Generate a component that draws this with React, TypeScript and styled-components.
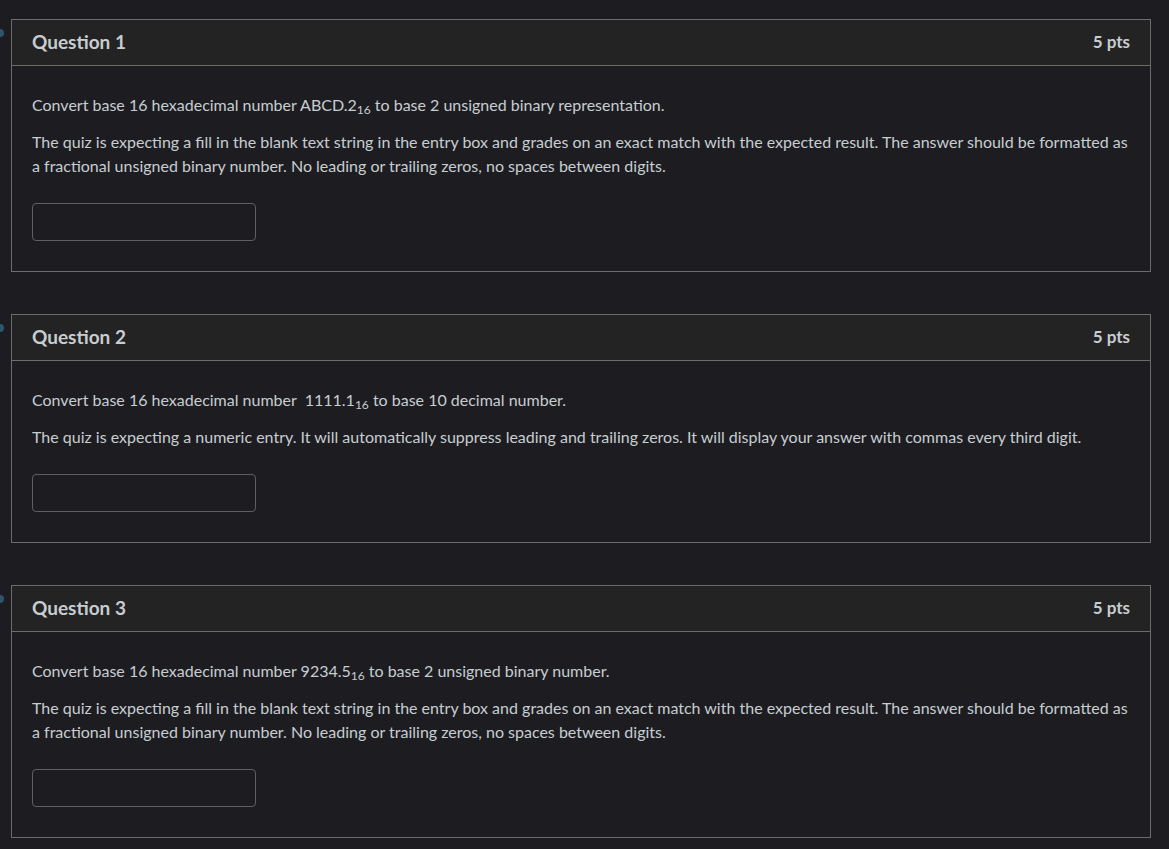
import React from 'react';
import styled, { createGlobalStyle } from 'styled-components';

const GlobalStyle = createGlobalStyle`
  html, body {
    margin: 0;
    padding: 0;
    background: #1d1d21;
  }
  body {
    font-family: Lato, "Noto Sans", sans-serif;
    color: #c7cdd1;
  }
`;

const Page = styled.div`
  padding: 19px 18px 20px 11px;
  display: flex;
  flex-direction: column;
  gap: 42px;
`;

const Card = styled.section`
  position: relative;
  width: 1138px;
  border: 1px solid #6b6b6b;
  background: #1d1d21;
`;

const Marker = styled.span`
  position: absolute;
  left: -16px;
  top: 9px;
  width: 8px;
  height: 8px;
  border-radius: 50%;
  background: #2c5670;
`;

const Header = styled.header`
  height: 46px;
  padding: 0 20px 3px 20px;
  box-sizing: border-box;
  display: flex;
  align-items: center;
  justify-content: space-between;
  background: #232323;
  border-bottom: 1px solid #6b6b6b;
`;

const Title = styled.h2`
  margin: 0;
  font-size: 19px;
  font-weight: 700;
  color: #c7cdd1;
`;

const Points = styled.span`
  font-size: 17px;
  font-weight: 700;
  color: #c7cdd1;
`;

const Body = styled.div`
  padding: 27px 20px 30px 20px;
`;

const Para = styled.p`
  margin: 0 0 13px 0;
  font-size: 16px;
  line-height: 24px;
  color: #c7cdd1;
`;

const Sub = styled.sub`
  font-size: 12px;
  vertical-align: -3px;
  line-height: 0;
`;

const Answer = styled.input`
  display: block;
  margin-top: 25px;
  width: 224px;
  height: 38px;
  box-sizing: border-box;
  background: #1d1d21;
  border: 1px solid #5f5f5f;
  border-radius: 4px;
  outline: none;
  color: #c7cdd1;
  font-family: Lato, sans-serif;
  font-size: 16px;
  padding: 0 8px;
`;

type Q = {
  n: number;
  first: React.ReactNode;
  second: string;
};

const fillText =
  'The quiz is expecting a fill in the blank text string in the entry box and grades on an exact match with the expected result. The answer should be formatted as a fractional unsigned binary number. No leading or trailing zeros, no spaces between digits.';

const questions: Q[] = [
  {
    n: 1,
    first: (
      <>
        Convert base 16 hexadecimal number ABCD.2<Sub>16</Sub> to base 2 unsigned binary representation.
      </>
    ),
    second: fillText,
  },
  {
    n: 2,
    first: (
      <>
        Convert base 16 hexadecimal number&nbsp; 1111.1<Sub>16</Sub> to base 10 decimal number.
      </>
    ),
    second:
      'The quiz is expecting a numeric entry. It will automatically suppress leading and trailing zeros. It will display your answer with commas every third digit.',
  },
  {
    n: 3,
    first: (
      <>
        Convert base 16 hexadecimal number 9234.5<Sub>16</Sub> to base 2 unsigned binary number.
      </>
    ),
    second: fillText,
  },
];

const App = () => (
  <>
    <GlobalStyle />
    <Page>
      {questions.map((q) => (
        <Card key={q.n}>
          <Marker />
          <Header>
            <Title>Question {q.n}</Title>
            <Points>5 pts</Points>
          </Header>
          <Body>
            <Para>{q.first}</Para>
            <Para>{q.second}</Para>
            <Answer type="text" aria-label={`Answer to question ${q.n}`} />
          </Body>
        </Card>
      ))}
    </Page>
  </>
);

export default App;
